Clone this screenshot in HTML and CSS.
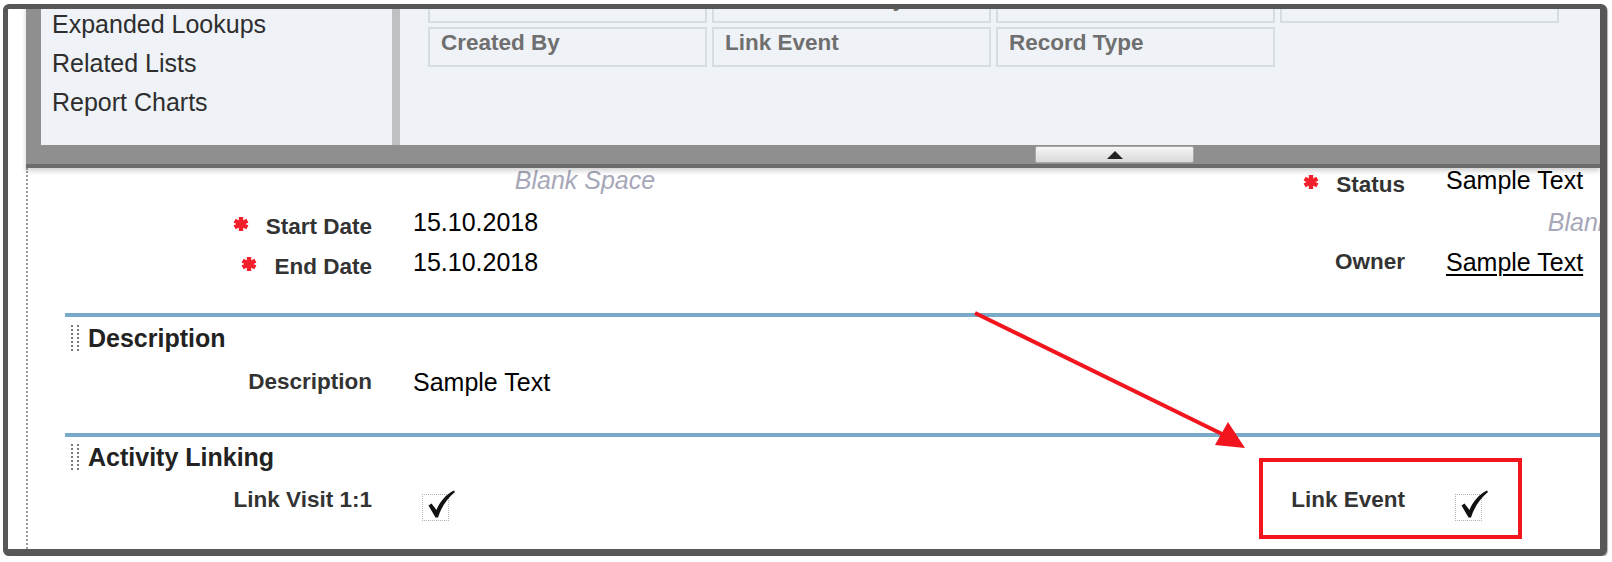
FILE: index.html
```html
<!DOCTYPE html>
<html>
<head>
<meta charset="utf-8">
<link rel="stylesheet" href="styles.css">
</head>
<body>
<div class="frame">
  <div class="palette">
    <div class="pal-panels">
      <ul class="pal-list">
        <li>Expanded Lookups</li>
        <li>Related Lists</li>
        <li>Report Charts</li>
      </ul>
      <div class="pal-divider"></div>
      <div class="pal-fields">
        <div class="pf"></div>
        <div class="pf pf-hidden">Last Modified By</div>
        <div class="pf"></div>
        <div class="pf"></div>
        <div class="pf">Created By</div>
        <div class="pf">Link Event</div>
        <div class="pf">Record Type</div>
      </div>
    </div>
    <div class="pal-band"><div class="pal-handle"><span class="tri"></span></div></div>
  </div>

  <div class="content">
    <div class="fields fields-top">
      <div class="blank">Blank Space</div>
      <div class="lbl"><svg class="req" viewBox="0 0 18 16"><path d="M9 1V15M2.6 4.6L15.4 11.4M2.6 11.4L15.4 4.6"/></svg>Status</div>
      <div class="val">Sample Text</div>

      <div class="lbl"><svg class="req" viewBox="0 0 18 16"><path d="M9 1V15M2.6 4.6L15.4 11.4M2.6 11.4L15.4 4.6"/></svg>Start Date</div>
      <div class="val">15.10.2018</div>
      <div class="blank">Blank Space</div>

      <div class="lbl"><svg class="req" viewBox="0 0 18 16"><path d="M9 1V15M2.6 4.6L15.4 11.4M2.6 11.4L15.4 4.6"/></svg>End Date</div>
      <div class="val">15.10.2018</div>
      <div class="lbl lbl-flush">Owner</div>
      <div class="val"><span class="link">Sample Text</span></div>
    </div>

    <div class="rule"></div>
    <div class="sec-head"><span class="grip"></span>Description</div>
    <div class="fields fields-desc">
      <div class="lbl lbl-flush">Description</div>
      <div class="val">Sample Text</div>
    </div>

    <div class="rule"></div>
    <div class="sec-head sec-head-2"><span class="grip"></span>Activity Linking</div>
    <div class="fields fields-link">
      <div class="lbl">Link Visit 1:1</div>
      <div class="val"><span class="chk"><svg viewBox="0 0 30 30"><path d="M2.5 16.5L5.5 14.5L10.5 21C14 12 20 5.5 28 1.5L29 3C21.5 9 15.5 17.5 12 28.5L9.5 28.5Z"/></svg></span></div>
      <div class="lbl">Link Event</div>
      <div class="val"><span class="chk"><svg viewBox="0 0 30 30"><path d="M2.5 16.5L5.5 14.5L10.5 21C14 12 20 5.5 28 1.5L29 3C21.5 9 15.5 17.5 12 28.5L9.5 28.5Z"/></svg></span></div>
    </div>
  </div>

  <div class="callout"></div>
  <svg class="arrow" viewBox="0 0 1592 540">
    <line x1="967" y1="304" x2="1214" y2="425" />
    <polygon points="1237,439 1207,436 1220,413" />
  </svg>
</div>
</body>
</html>
```

FILE: styles.css
```css
html, body {
  margin: 0;
  padding: 0;
  background: #ffffff;
}

.frame {
  position: relative;
  box-sizing: border-box;
  width: 1604px;
  height: 552px;
  margin: 4px 0 0 3px;
  border-style: solid;
  border-color: #575757;
  border-width: 5px 7px 7px 5px;
  border-radius: 6px;
  overflow: hidden;
  background: #ffffff;
  box-shadow: 1px 1px 1px rgba(0, 0, 0, 0.3);
  font-family: "Liberation Sans", Arial, Helvetica, sans-serif;
  display: flex;
  flex-direction: column;
}

/* ---------- palette ---------- */
.palette {
  margin: -49px 0 0 18px;
  padding-left: 15px;
  background: #8f8f8f;
  border-bottom: 4px solid #6c6c6c;
  box-shadow: 0 3px 5px rgba(0, 0, 0, 0.18);
  position: relative;
  z-index: 1;
  flex: none;
}

.pal-panels {
  display: flex;
  height: 185px;
}

.pal-list {
  list-style: none;
  margin: 0;
  padding: 45px 0 0 11px;
  width: 351px;
  box-sizing: border-box;
  background: #eff3f7;
  font-size: 25px;
  line-height: 39px;
  color: #2e2e2e;
  flex: none;
}

.pal-list li {
  white-space: nowrap;
}

.pal-divider {
  width: 8px;
  background: #bec0c4;
  flex: none;
}

.pal-fields {
  flex: 1;
  background: #eff3f7;
  padding: 23px 0 0 28px;
  display: grid;
  grid-template-columns: repeat(4, 279px);
  grid-auto-rows: 40px;
  gap: 4px 5px;
  align-content: start;
}

.pf {
  box-sizing: border-box;
  border: 2px solid #d6dddf;
  padding: 1px 11px;
  font-weight: bold;
  font-size: 22.5px;
  line-height: 26px;
  color: #6f6f6f;
  white-space: nowrap;
  overflow: hidden;
}

.pal-band {
  height: 18px;
}

.pal-handle {
  box-sizing: border-box;
  width: 159px;
  height: 17px;
  margin: 1px 0 0 994px;
  background: linear-gradient(#f6f6f6, #d9d9d9);
  border: 1px solid #a8a8a8;
  border-radius: 2px;
  display: flex;
  align-items: center;
  justify-content: center;
}

.tri {
  width: 0;
  height: 0;
  border-left: 8px solid transparent;
  border-right: 8px solid transparent;
  border-bottom: 8px solid #222222;
}

/* ---------- layout content ---------- */
.content {
  flex: 1;
  margin-left: 18px;
  border-left: 2px dotted #9a9a9a;
}

.fields {
  display: grid;
  grid-template-columns: 344px 689px 344px 689px;
}

.fields-top {
  grid-template-rows: 42px 40px 40px;
}

.lbl {
  text-align: right;
  font-weight: bold;
  font-size: 22.5px;
  line-height: 24px;
  padding-top: 5px;
  color: #333333;
  white-space: nowrap;
}

.lbl-flush {
  padding-top: 0;
}

.val {
  padding-left: 41px;
  font-size: 25px;
  line-height: 24px;
  color: #000000;
  white-space: nowrap;
}

.blank {
  grid-column: span 2;
  padding-left: 81px;
  text-align: center;
  font-style: italic;
  font-size: 25px;
  line-height: 24px;
  color: #a6a7b9;
  white-space: nowrap;
}

.link {
  text-decoration: underline;
  text-underline-offset: 3px;
  text-decoration-thickness: 2px;
}

.req {
  width: 18px;
  height: 16px;
  margin-right: 16px;
  vertical-align: 2px;
}

.req path {
  fill: none;
  stroke: #f2202a;
  stroke-width: 4.4;
}

.rule {
  height: 4px;
  background: #79aaca;
  margin: 23px 0 0 37px;
}

.sec-head {
  display: flex;
  align-items: center;
  height: 30px;
  margin-top: 6px;
  padding-left: 43px;
  font-size: 25px;
  font-weight: bold;
  color: #222222;
  white-space: nowrap;
}

.sec-head-2 {
  margin-top: 5px;
}

.grip {
  width: 4px;
  height: 26px;
  border-left: 2px dotted #7a7a7a;
  border-right: 2px dotted #7a7a7a;
  margin-right: 9px;
  flex: none;
}

.fields-desc {
  margin-top: 17px;
  grid-template-rows: 40px;
}

.fields-link {
  margin-top: 11px;
  grid-template-rows: 45px;
}

.chk {
  position: relative;
  display: block;
  box-sizing: border-box;
  width: 27px;
  height: 27px;
  margin: 11px 0 0 9px;
  border: 1px dotted #b3b3b3;
}

.chk svg {
  position: absolute;
  left: 3px;
  top: -6px;
  width: 30px;
  height: 30px;
}

.chk path {
  fill: #111111;
}

/* ---------- annotations ---------- */
.callout {
  position: absolute;
  left: 1251px;
  top: 449px;
  width: 263px;
  height: 81px;
  box-sizing: border-box;
  border: 4px solid #f2151d;
  z-index: 2;
}

.arrow {
  position: absolute;
  left: 0;
  top: 0;
  width: 1592px;
  height: 540px;
  z-index: 3;
  pointer-events: none;
}

.arrow line {
  stroke: #f2151d;
  stroke-width: 4;
}

.arrow polygon {
  fill: #f2151d;
}
```
